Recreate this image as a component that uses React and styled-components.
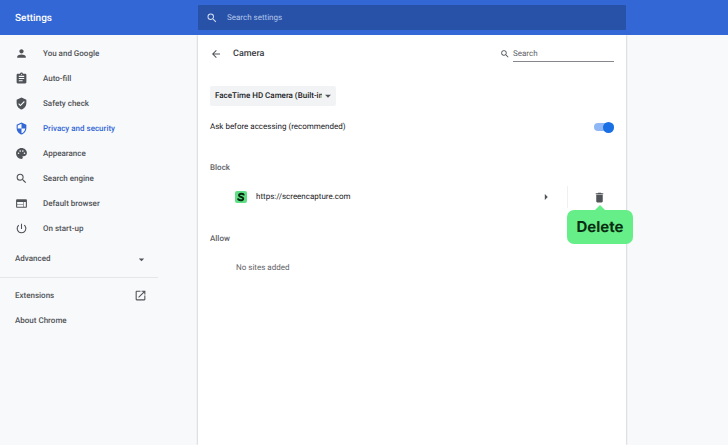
import React from "react";
import styled, { createGlobalStyle } from "styled-components";
import {
  MdPerson, MdAssignment, MdVerifiedUser, MdSecurity, MdPalette, MdSearch, MdWeb,
  MdPowerSettingsNew, MdArrowDropDown, MdOpenInNew, MdArrowBack, MdDelete, MdArrowRight,
} from "react-icons/md";

const GlobalStyle = createGlobalStyle`
  *, *::before, *::after { box-sizing: border-box; }
  html, body, #root { height: 100%; }
  body {
    margin: 0;
    background: #f8f9fb;
    color: #202124;
    font: 400 8px/12px Roboto, sans-serif;
    text-rendering: geometricPrecision;
  }
  button, input, select { font: inherit; color: inherit; margin: 0; text-rendering: inherit; }
`;

const Page = styled.div`
  min-height: 100%;
  display: grid;
  grid-template-columns: 198px minmax(0, 1fr) 102px;
  grid-template-rows: 35px 1fr;
`;

const Header = styled.header`
  grid-column: 1 / -1;
  display: grid;
  grid-template-columns: subgrid;
  align-items: center;
  background: #3367d6;
`;

const Title = styled.h1`
  margin: 0;
  padding: 2px 0 0 15px;
  font-size: 10px;
  line-height: 16px;
  font-weight: 500;
  color: #fff;
`;

const TopSearch = styled.label`
  height: 25px;
  display: flex;
  align-items: center;
  gap: 9px;
  padding: 0 8px;
  border-radius: 1px;
  background: #2852a8;
  color: #d3def3;
`;

const SearchInput = styled.input`
  flex: 1;
  min-width: 0;
  padding: 1px 0 0;
  border: 0;
  outline: 0;
  background: transparent;
  &::placeholder { color: #b3c5ea; opacity: 1; }
`;

const Sidebar = styled.nav`
  padding-top: 6px;
  color: #505357;
  font-weight: 500;
`;

const NavItem = styled.a`
  height: 25px;
  display: flex;
  align-items: center;
  gap: 15px;
  padding: 0 51px 0 15px;
  color: ${(p) => (p.$active ? "#3367d6" : "inherit")};
  text-decoration: none;
`;

const NavList = styled.div`
  display: grid;
  grid-auto-rows: 25px;
`;

const SplitItem = styled(NavItem)`
  justify-content: space-between;
`;

const Advanced = styled.button`
  width: 100%;
  height: 36px;
  display: flex;
  align-items: center;
  justify-content: space-between;
  padding: 0 50px 0 15px;
  border: 0;
  background: transparent;
`;

const Divider = styled.hr`
  margin: 0 40px 5px 0;
  border: 0;
  border-top: 1px solid #e4e6e9;
`;

const Panel = styled.main`
  background: #fff;
  box-shadow: 0 0 2px rgba(60, 64, 67, 0.4);
  clip-path: inset(0 -12px);
  padding: 8px 12px 0;
`;

const PanelHeader = styled.div`
  height: 22px;
  display: flex;
  align-items: center;
  gap: 11px;
`;

const IconButton = styled.button`
  display: flex;
  padding: 0;
  border: 0;
  background: transparent;
  color: #505357;
`;

const PanelTitle = styled.h2`
  flex: 1;
  margin: 0;
  font-size: 9px;
  line-height: 12px;
  font-weight: 500;
  color: #3c4043;
`;

const LocalSearch = styled.label`
  display: flex;
  align-items: center;
  gap: 3px;
  color: #505357;
`;

const UnderlinedInput = styled.input`
  width: 101px;
  height: 16px;
  padding: 0;
  border: 0;
  border-bottom: 1px solid #85888d;
  outline: 0;
  background: transparent;
  &::placeholder { color: #5f6368; opacity: 1; }
`;

const SelectWrap = styled.div`
  width: 126px;
  margin-top: 21px;
  display: grid;
  align-items: center;
  border-radius: 2px;
  background: #f1f3f4;
  & > * { grid-area: 1 / 1; }
  & > svg { justify-self: end; margin-right: 1px; pointer-events: none; color: #505357; }
`;

const CameraSelect = styled.select`
  width: 100%;
  height: 20px;
  appearance: none;
  padding: 0 14px 0 5px;
  border: 0;
  background: transparent;
  font-weight: 500;
`;

const SettingRow = styled.label`
  height: 20px;
  margin-top: 11px;
  display: flex;
  align-items: center;
  justify-content: space-between;
`;

const Toggle = styled.input`
  appearance: none;
  width: 20px;
  height: 12px;
  margin: 0;
  display: grid;
  align-items: center;
  &::before, &::after { content: ""; grid-area: 1 / 1; }
  &::before {
    height: 8px;
    border-radius: 4px;
    background: #8fb6f5;
  }
  &::after {
    width: 11px;
    height: 11px;
    justify-self: end;
    border-radius: 50%;
    background: #1a6fe4;
  }
  &:not(:checked)::before { background: #bdc1c6; }
  &:not(:checked)::after { justify-self: start; background: #fff; }
`;

const SectionTitle = styled.h3`
  margin: 25px 0 0;
  font-size: 8px;
  line-height: 12px;
  font-weight: 500;
  color: #5f6368;
`;

const SiteRow = styled.div`
  height: 22px;
  margin-top: 12px;
  display: flex;
  align-items: center;
  padding: 0 8px 0 25px;
`;

const SiteName = styled.span`
  flex: 1;
  margin-left: 9px;
`;

const DeleteCell = styled.div`
  position: relative;
  height: 100%;
  margin-left: 14px;
  padding-left: 25px;
  display: flex;
  align-items: center;
  border-left: 1px solid #eff0f1;
`;

const Tooltip = styled.div`
  position: absolute;
  top: 24px;
  left: 50%;
  transform: translateX(-50%);
  margin-left: 13px;
  width: 66px;
  height: 34px;
  display: grid;
  place-items: center;
  border-radius: 7px;
  background: #66ee88;
  color: #0a2e12;
  font: 700 15px/20px Inter, sans-serif;
  &::before {
    content: "";
    position: absolute;
    top: -5px;
    left: 50%;
    margin-left: -6px;
    border: 6px solid transparent;
    border-top: 0;
    border-bottom-color: #66ee88;
  }
`;

const Empty = styled.p`
  margin: 17px 0 0 26px;
  color: #5f6368;
`;

const NAV = [
  [MdPerson, "You and Google"],
  [MdAssignment, "Auto-fill"],
  [MdVerifiedUser, "Safety check"],
  [MdSecurity, "Privacy and security"],
  [MdPalette, "Appearance"],
  [MdSearch, "Search engine"],
  [MdWeb, "Default browser"],
  [MdPowerSettingsNew, "On start-up"],
];

const SiteIcon = () => (
  <svg width="12" height="12" viewBox="0 0 24 24" aria-hidden="true">
    <rect width="24" height="24" rx="4" fill="#5fe085" />
    <path d="M18 8.800C17.500 6.500 15.500 5.500 12.800 5.500 9.500 5.500 8 7 8 8.800c0 4 8.500 2.400 8.500 6 0 2.200-2 3.700-5 3.700-3 0-5.300-1.200-5.500-3.800" fill="none" stroke="#082b10" strokeWidth="3.800" />
  </svg>
);

export default function App() {
  return (
    <>
      <GlobalStyle />
      <Page>
        <Header>
          <Title>Settings</Title>
          <TopSearch>
            <MdSearch size={12} />
            <SearchInput type="search" placeholder="Search settings" aria-label="Search settings" />
          </TopSearch>
        </Header>
        <Sidebar>
          <NavList>
            {NAV.map(([Icon, label]) => (
              <NavItem key={label} href="#" $active={label === "Privacy and security"}>
                <Icon size={13} />
                {label}
              </NavItem>
            ))}
          </NavList>
          <Advanced type="button">
            Advanced
            <MdArrowDropDown size={13} />
          </Advanced>
          <Divider />
          <SplitItem href="#">
            Extensions
            <MdOpenInNew size={13} />
          </SplitItem>
          <SplitItem href="#">About Chrome</SplitItem>
        </Sidebar>
        <Panel>
          <PanelHeader>
            <IconButton type="button" aria-label="Back"><MdArrowBack size={12} /></IconButton>
            <PanelTitle>Camera</PanelTitle>
            <LocalSearch>
              <MdSearch size={10} />
              <UnderlinedInput type="search" placeholder="Search" aria-label="Search" />
            </LocalSearch>
          </PanelHeader>
          <SelectWrap>
            <CameraSelect aria-label="Camera">
              <option>FaceTime HD Camera (Built-in)</option>
            </CameraSelect>
            <MdArrowDropDown size={14} />
          </SelectWrap>
          <SettingRow>
            Ask before accessing (recommended)
            <Toggle type="checkbox" role="switch" defaultChecked />
          </SettingRow>
          <SectionTitle>Block</SectionTitle>
          <SiteRow>
            <SiteIcon />
            <SiteName>https://screencapture.com</SiteName>
            <IconButton type="button" aria-label="Site details"><MdArrowRight size={14} /></IconButton>
            <DeleteCell>
              <IconButton type="button" aria-label="Delete site"><MdDelete size={13} /></IconButton>
              <Tooltip role="tooltip">Delete</Tooltip>
            </DeleteCell>
          </SiteRow>
          <SectionTitle>Allow</SectionTitle>
          <Empty>No sites added</Empty>
        </Panel>
      </Page>
    </>
  );
}
